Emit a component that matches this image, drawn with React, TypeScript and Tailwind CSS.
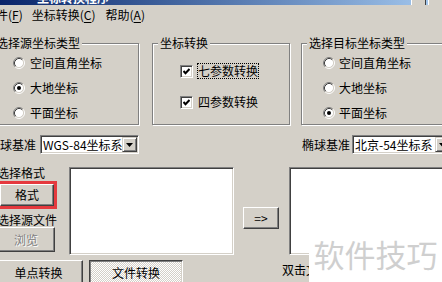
import React from "react";

const raised =
  "border border-t-white border-l-white border-r-[#404040] border-b-[#404040] shadow-[inset_-1px_-1px_0_#808080]";
const sunken =
  "border border-t-[#808080] border-l-[#808080] border-r-white border-b-white shadow-[inset_1px_1px_0_#404040,inset_-1px_-1px_0_#d4d0c8]";
const pressed =
  "border border-t-[#404040] border-l-[#404040] border-r-white border-b-white shadow-[inset_1px_1px_0_#808080,inset_-1px_-1px_0_#d4d0c8]";

function Radio({ checked }: { checked?: boolean }) {
  return (
    <svg width="12" height="12" viewBox="0 0 12 12" className="shrink-0">
      <circle cx="6" cy="6" r="4.5" fill="#fff" />
      <path d="M2.11 9.89A5.5 5.5 0 0 1 9.89 2.11" fill="none" stroke="#808080" />
      <path d="M9.89 2.11A5.5 5.5 0 0 1 2.11 9.89" fill="none" stroke="#fff" />
      <path d="M2.82 9.18A4.5 4.5 0 0 1 9.18 2.82" fill="none" stroke="#404040" />
      <path d="M9.18 2.82A4.5 4.5 0 0 1 2.82 9.18" fill="none" stroke="#d4d0c8" />
      {checked && <circle cx="6" cy="6" r="2" fill="#000" />}
    </svg>
  );
}

function Check() {
  return (
    <div className={`w-[13px] h-[13px] shrink-0 bg-white ${sunken} flex items-center justify-center`}>
      <svg width="7" height="7" viewBox="0 0 7 7">
        <polyline points="0.5,3 2.5,5.2 6.5,1" fill="none" stroke="#000" strokeWidth="2" />
      </svg>
    </div>
  );
}

function Group({
  label,
  className,
  children,
}: {
  label: string;
  className: string;
  children: React.ReactNode;
}) {
  return (
    <div className={`relative shrink-0 ${className}`}>
      <div className="h-[7px]" />
      <div className="h-[82px] border border-[#808080] shadow-[inset_1px_1px_0_#fff,1px_1px_0_#fff]">
        {children}
      </div>
      <span className="absolute left-[6px] top-0 bg-[#d4d0c8] px-[2px] leading-[14px] whitespace-nowrap">
        {label}
      </span>
    </div>
  );
}

function Select({ text, className }: { text: string; className: string }) {
  return (
    <div className={`h-[19px] p-[1px] bg-white ${sunken} flex items-stretch ${className}`}>
      <span className="flex-1 pl-[1px] leading-[15px] whitespace-nowrap overflow-hidden">{text}</span>
      <div className="w-[15px] shrink-0 bg-[#d4d0c8] border border-t-[#d4d0c8] border-l-[#d4d0c8] border-r-[#404040] border-b-[#404040] shadow-[inset_1px_1px_0_#fff,inset_-1px_-1px_0_#808080] flex items-center justify-center">
        <svg width="7" height="4" viewBox="0 0 7 4">
          <path d="M0 0h7L3.5 4z" fill="#000" />
        </svg>
      </div>
    </div>
  );
}

export default function App() {
  return (
    <div className="relative w-[442px] h-[282px] overflow-hidden bg-[#d4d0c8] text-[12px] leading-[14px] text-black font-['Noto_Sans_CJK_SC',sans-serif]">
      {/* title bar */}
      <div className="h-[5px] overflow-hidden bg-gradient-to-r from-[#0a246a] to-[#a6caf0] flex">
        <span className="ml-[37px] mt-[-9px] leading-[14px] font-bold text-white whitespace-nowrap">
          坐标转换程序
        </span>
        <div className="ml-auto flex gap-[2px] mr-0">
          <div className="w-[15px] h-[5px] bg-[#d4d0c8] border-l border-l-white border-r border-r-[#404040]" />
          <div className="w-[14px] h-[5px] bg-[#d4d0c8] border-l border-l-white" />
        </div>
      </div>

      {/* menu */}
      <div className="h-[19px] flex items-center gap-[9px] ml-[-16px] whitespace-nowrap">
        <span>
          文件(<span className="underline underline-offset-2">F</span>)
        </span>
        <span>
          坐标转换(<span className="underline underline-offset-2">C</span>)
        </span>
        <span className="ml-[1px]">
          帮助(<span className="underline underline-offset-2">A</span>)
        </span>
      </div>

      {/* group boxes */}
      <div className="mt-[12px] flex">
        <Group label="选择源坐标类型" className="ml-[-12px] w-[151px]">
          <div className="pt-[12px] pl-[24px] flex flex-col gap-[11px]">
            <div className="h-[14px] flex items-center gap-[5px]">
              <Radio />
              <span>空间直角坐标</span>
            </div>
            <div className="h-[14px] flex items-center gap-[5px]">
              <Radio checked />
              <span>大地坐标</span>
            </div>
            <div className="h-[14px] flex items-center gap-[5px]">
              <Radio />
              <span>平面坐标</span>
            </div>
          </div>
        </Group>
        <Group label="坐标转换" className="ml-[13px] w-[138px]">
          <div className="pt-[19px] pl-[27px] flex flex-col gap-[15px]">
            <div className="h-[16px] flex items-center gap-[4px]">
              <Check />
              <span className="h-[16px] border border-dotted border-black leading-[14px] whitespace-nowrap">
                七参数转换
              </span>
            </div>
            <div className="h-[16px] flex items-center gap-[4px]">
              <Check />
              <span className="h-[16px] border border-transparent leading-[14px] whitespace-nowrap">
                四参数转换
              </span>
            </div>
          </div>
        </Group>
        <Group label="选择目标坐标类型" className="ml-[11px] w-[160px]">
          <div className="pt-[12px] pl-[21px] flex flex-col gap-[11px]">
            <div className="h-[14px] flex items-center gap-[4px]">
              <Radio />
              <span>空间直角坐标</span>
            </div>
            <div className="h-[14px] flex items-center gap-[4px]">
              <Radio />
              <span>大地坐标</span>
            </div>
            <div className="h-[14px] flex items-center gap-[4px]">
              <Radio checked />
              <span>平面坐标</span>
            </div>
          </div>
        </Group>
      </div>

      {/* ellipsoid row */}
      <div className="mt-[10px] h-[19px] flex items-center">
        <span className="ml-[-12px] whitespace-nowrap">椭球基准</span>
        <Select text="WGS-84坐标系" className="ml-[4px] w-[99px] shrink-0" />
        <span className="ml-[163px] whitespace-nowrap">椭球基准</span>
        <Select text="北京-54坐标系" className="ml-[2px] w-[100px] shrink-0" />
      </div>

      {/* file area */}
      <div className="mt-[12px] h-[89px] flex items-start">
        <div className="ml-[-3px] w-[60px] shrink-0 flex flex-col">
          <span className="h-[14px] whitespace-nowrap">选择格式</span>
          <div className="mt-[1px] h-[28px] border-[3px] border-[#e5393e]">
            <div className={`w-full h-full ${raised} flex items-center justify-center`}>格式</div>
          </div>
          <span className="mt-[4px] h-[14px] whitespace-nowrap">选择源文件</span>
          <div className={`w-[58px] h-[25px] ${raised} flex items-center justify-center`}>
            <span className="text-[#808080] [text-shadow:1px_1px_0_#fff]">浏览</span>
          </div>
        </div>
        <div className={`ml-[12px] mt-[1px] w-[165px] h-[88px] shrink-0 bg-white ${sunken}`} />
        <div className={`ml-[9px] mt-[41px] w-[36px] h-[22px] shrink-0 ${raised} flex items-center justify-center`}>
          =&gt;
        </div>
        <div className={`ml-[10px] mt-[1px] w-[160px] h-[88px] shrink-0 bg-white ${sunken}`} />
      </div>

      {/* bottom row */}
      <div className="mt-[5px] h-[26px] flex items-start">
        <div className={`ml-[-6px] w-[89px] h-[26px] shrink-0 ${raised} flex items-center justify-center`}>
          单点转换
        </div>
        <div
          className={`ml-[6px] w-[94px] h-[26px] shrink-0 ${pressed} bg-[repeating-conic-gradient(#ffffff_0%_25%,#d4d0c8_0%_50%)] bg-[length:2px_2px] flex items-center justify-center`}
        >
          文件转换
        </div>
        <span className="ml-[99px] mt-[3px] whitespace-nowrap">双击文本框可清空</span>
      </div>

      {/* watermark */}
      <div className="absolute left-[309px] top-[226px] w-[133px] h-[56px] bg-white flex items-center justify-center">
        <span className="text-[31px] leading-[34px] text-[#cfcfcf] whitespace-nowrap">软件技巧</span>
      </div>
    </div>
  );
}
